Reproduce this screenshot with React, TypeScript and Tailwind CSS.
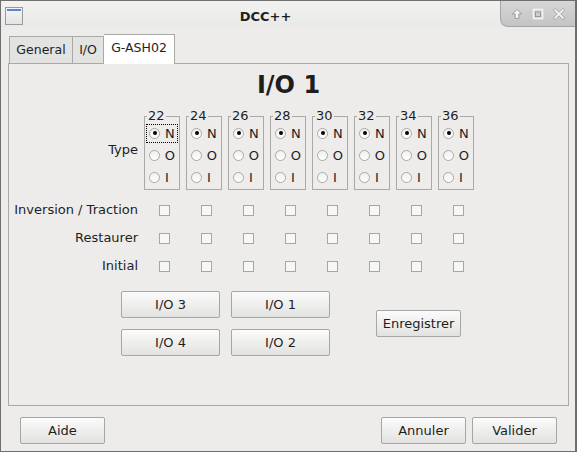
import React from 'react';

const PINS = ['22', '24', '26', '28', '30', '32', '34', '36'];
const ROWS = ['Inversion / Traction', 'Restaurer', 'Initial'];

const btn =
  'flex items-center justify-center h-[27px] rounded-[2px] border border-[#a6a6a4] bg-gradient-to-b from-[#fbfbfb] to-[#e2e2e0] text-[#1e1e1e]';

function Radio({ checked, label, focus }: { checked?: boolean; label: string; focus?: boolean }) {
  return (
    <div className="flex items-center h-[22px] pl-[1px]">
      <span
        className={`flex items-center gap-[5px] px-[2px] h-[19px] w-[32px] border border-dotted ${
          focus ? 'border-black' : 'border-transparent'
        }`}
      >
        <span className="flex items-center justify-center w-[11px] h-[11px] rounded-full border border-[#a9a9a6] bg-gradient-to-b from-[#f0f0ee] to-white">
          {checked && <span className="w-[4px] h-[4px] rounded-full bg-black" />}
        </span>
        <span className="leading-none">{label}</span>
      </span>
    </div>
  );
}

function PinGroup({ pin, first }: { pin: string; first?: boolean }) {
  return (
    <div className="pt-[8px]">
      <div className="relative border border-[#a9a9a6] pt-[5px] pb-[1px]">
        <span className="absolute -top-[8px] left-[2px] px-[1px] leading-[14px] bg-[#edeceb]">{pin}</span>
        <Radio checked label="N" focus={first} />
        <Radio label="O" />
        <Radio label="I" />
      </div>
    </div>
  );
}

function Check() {
  return (
    <div className="flex items-center h-[28px] pl-[15px]">
      <span className="w-[11px] h-[11px] border border-[#a6a6a2] bg-[#f7f7f6]" />
    </div>
  );
}

function TitleBar() {
  return (
    <div className="flex items-center h-[26px] bg-gradient-to-b from-[#f2f2f1] to-[#e9e9e8]">
      <div className="ml-[4px] mt-[4px] w-[18px] h-[18px] border border-[#9a9a9a] bg-gradient-to-b from-[#f6f6f6] to-[#e3e3e3] flex flex-col">
        <span className="h-[2px] mt-[1px] mx-[1px] bg-[#5a85c8]" />
      </div>
      <div className="flex-1 text-center font-bold text-[13px] text-[#1e1e1e] pl-[8px] pt-[6px]">DCC++</div>
      <div className="flex items-center justify-around self-start h-[26px] w-[75px] rounded-bl-[8px] border-l border-b border-[#a4a4a4] bg-gradient-to-b from-[#d6d6d6] to-[#c4c4c4] px-[6px]">
        <svg width="12" height="12" viewBox="0 0 12 12">
          <path d="M6 1.5 L10.5 6 L7.8 6 L7.8 10.5 L4.2 10.5 L4.2 6 L1.5 6 Z" fill="#f4f4f4" stroke="#8e8e8e" strokeWidth="0.8" />
        </svg>
        <svg width="12" height="12" viewBox="0 0 12 12">
          <rect x="1.5" y="1.5" width="9" height="9" fill="none" stroke="#f4f4f4" strokeWidth="1.6" />
          <rect x="3.5" y="4" width="5" height="4.5" fill="none" stroke="#8e8e8e" strokeWidth="0.8" />
        </svg>
        <svg width="12" height="12" viewBox="0 0 12 12">
          <path d="M2 2 L10 10 M10 2 L2 10" stroke="#8e8e8e" strokeWidth="3" strokeLinecap="round" />
          <path d="M2 2 L10 10 M10 2 L2 10" stroke="#f4f4f4" strokeWidth="1.8" strokeLinecap="round" />
        </svg>
      </div>
    </div>
  );
}

export default function App() {
  return (
    <div className="w-[577px] h-[452px] flex flex-col bg-[#edeceb] border border-[#6e6e6e] border-r-2 font-['DejaVu_Sans',sans-serif] text-[13px] text-[#1e1e1e] overflow-hidden">
      <TitleBar />

      {/* tabs */}
      <div className="flex items-end h-[36px] pl-[8px]">
        <div className="flex items-center justify-center w-[64px] h-[27px] text-[12.5px] border border-b-0 border-[#a9a9a6] bg-[#e3e3e1]">General</div>
        <div className="flex items-center justify-center w-[31px] h-[27px] text-[12.5px] border border-b-0 border-l-0 border-[#a9a9a6] bg-[#e3e3e1]">I/O</div>
        <div className="relative z-10 -mb-px flex items-center justify-center w-[71px] h-[30px] pb-[2px] text-[12.5px] border border-b-0 border-l-0 border-[#a9a9a6] bg-white">
          G-ASH02
        </div>
      </div>

      {/* panel */}
      <div className="ml-[7px] mr-[6px] h-[343px] border border-[#a9a9a6] bg-[#edeceb]">
        <div className="pt-[7px] text-center font-bold text-[24px] leading-[28px]">I/O 1</div>

        <div className="grid grid-cols-[129px_repeat(8,36px)] gap-x-[6px] mt-[9px]">
          <div className="flex items-center justify-end pt-[1px]">Type</div>
          {PINS.map((p, i) => (
            <PinGroup key={p} pin={p} first={i === 0} />
          ))}
        </div>

        <div className="grid grid-cols-[129px_repeat(8,36px)] gap-x-[6px] mt-[6px]">
          {ROWS.map((r) => (
            <React.Fragment key={r}>
              <div className="flex items-center justify-end h-[28px]">{r}</div>
              {PINS.map((p) => (
                <Check key={p} />
              ))}
            </React.Fragment>
          ))}
        </div>

        <div className="flex items-center mt-[11px] ml-[112px]">
          <div className="grid grid-cols-[99px_99px] gap-x-[11px] gap-y-[11px]">
            <button className={btn}>I/O 3</button>
            <button className={btn}>I/O 1</button>
            <button className={btn}>I/O 4</button>
            <button className={btn}>I/O 2</button>
          </div>
          <button className={`${btn} w-[85px] ml-[46px]`}>Enregistrer</button>
        </div>
      </div>

      {/* bottom buttons */}
      <div className="flex items-center mt-[11px] pl-[19px] pr-[18px]">
        <button className={`${btn} w-[85px]`}>Aide</button>
        <div className="flex-1" />
        <button className={`${btn} w-[85px]`}>Annuler</button>
        <button className={`${btn} w-[85px] ml-[6px]`}>Valider</button>
      </div>
    </div>
  );
}
